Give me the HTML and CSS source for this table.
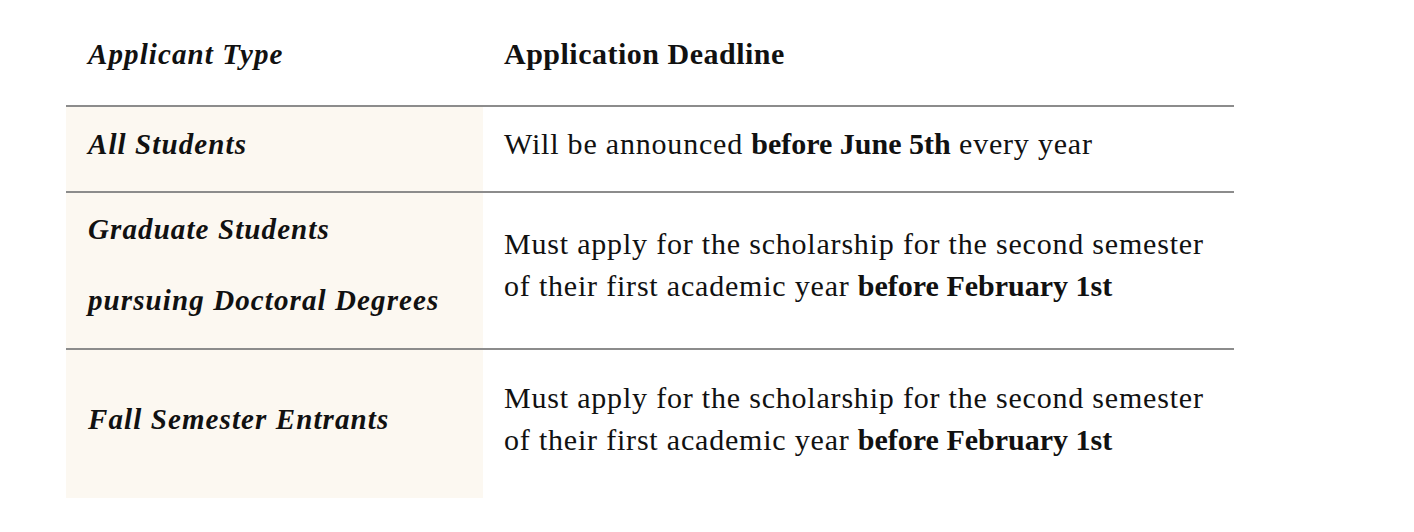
FILE: index.html
```html
<!DOCTYPE html>
<html lang="en">
<head>
<meta charset="utf-8">
<title>Application Deadlines</title>
<link rel="stylesheet" href="styles.css">
</head>
<body>
<div class="table">
  <div class="row head">
    <div class="cell type">Applicant Type</div>
    <div class="cell deadline">Application Deadline</div>
  </div>
  <div class="row r1">
    <div class="cell type">All Students</div>
    <div class="cell deadline"><p>Will be announced <b>before June 5th</b> every year</p></div>
  </div>
  <div class="row r2">
    <div class="cell type"><p class="multi">Graduate Students<br>pursuing Doctoral Degrees</p></div>
    <div class="cell deadline"><p>Must apply for the scholarship for the second semester<br>of their first academic year <b>before February 1st</b></p></div>
  </div>
  <div class="row r3">
    <div class="cell type">Fall Semester Entrants</div>
    <div class="cell deadline"><p>Must apply for the scholarship for the second semester<br>of their first academic year <b>before February 1st</b></p></div>
  </div>
</div>
</body>
</html>
```
FILE: styles.css
```css
html, body {
  margin: 0;
  padding: 0;
  background: #ffffff;
}
body {
  font-family: "Liberation Serif", "Times New Roman", serif;
  color: #111111;
  font-size: 30px;
  line-height: 42px;
}
.table {
  width: 1168px;
  margin: 11px 0 0 66px;
  display: flex;
  flex-direction: column;
}
.row {
  display: grid;
  grid-template-columns: 417px 1fr;
}
.row + .row {
  border-top: 2px solid #8c8c8c;
}
.cell {
  display: flex;
  align-items: center;
  padding: 0 22px 11px 22px;
}
.cell p {
  margin: 0;
}
.cell.deadline {
  padding-left: 21px;
  letter-spacing: 0.8px;
}
.cell.deadline b {
  letter-spacing: 0;
}
.type {
  font-size: 29px;
  font-weight: bold;
  font-style: italic;
  letter-spacing: 1.1px;
}
.row + .row .type {
  background: #fcf8f1;
}
.head .cell {
  padding-top: 22px;
  padding-bottom: 30px;
}
.head .deadline {
  font-weight: bold;
  letter-spacing: 0.5px;
}
.r1 .cell {
  padding-top: 16px;
  padding-bottom: 26px;
}
.r2 {
  min-height: 155px;
}
.multi {
  line-height: 71px;
}
.r3 {
  min-height: 148px;
}
b {
  font-weight: bold;
}
```
